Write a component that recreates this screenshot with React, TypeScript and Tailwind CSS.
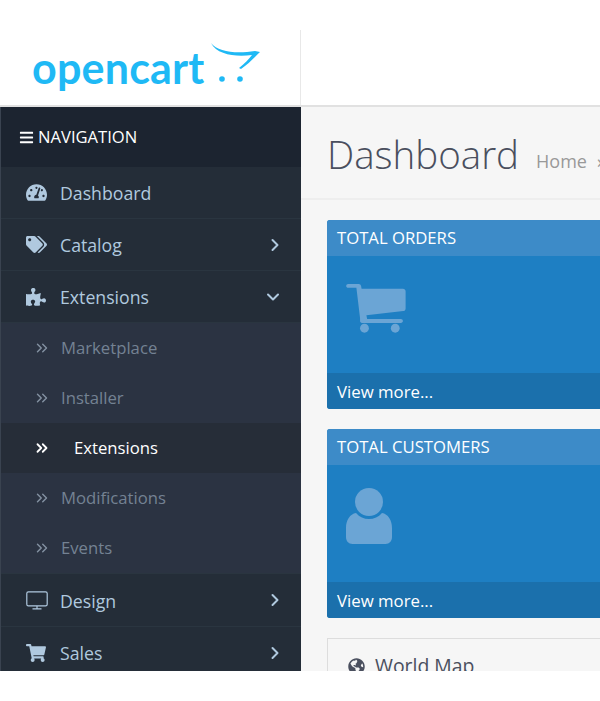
import { ReactNode } from "react";
import {
  FaBars,
  FaGlobeAmericas,
  FaPuzzlePiece,
  FaShoppingCart,
  FaTachometerAlt,
  FaTags,
} from "react-icons/fa";
import { ChevronDown, ChevronRight, ChevronsRight } from "lucide-react";

function Logo() {
  return (
    <div className="flex items-start">
      <span className="font-['Lato'] text-[43px] font-bold leading-[50px] tracking-[0.2px] text-[#1fb9f5]">opencart</span>
      <svg width="54" height="46" viewBox="0 0 54 46" className="-mt-px ml-px text-[#1fb9f5]" fill="currentColor">
        <path d="M5 1 C12 10 30 12 49 9 L54 10 C47 17 42 22 35 27 L33 26 C39 21 43 17 46 13 C30 15 11 13 5 1 Z" />
        <circle cx="16" cy="37" r="2.8" />
        <circle cx="34" cy="37" r="2.8" />
      </svg>
    </div>
  );
}

function MonitorIcon() {
  return (
    <svg width="22" height="19" viewBox="0 0 22 19" fill="none" stroke="currentColor" strokeWidth="1.2">
      <rect x="0.8" y="0.8" width="20.4" height="14" rx="1.6" />
      <path d="M11 15v2.600M6.500 17.800h9" />
    </svg>
  );
}

function NavItem({ icon, label, arrow, tall }: { icon: ReactNode; label: string; arrow?: "right" | "down"; tall?: boolean }) {
  return (
    <div className={`flex items-center border-b border-[#2a3540] bg-[#242d38] pl-[25px] text-[#b0c9df] ${tall ? "h-[53px]" : "h-[52px]"}`}>
      <span className="flex w-[34px] shrink-0 items-center">{icon}</span>
      <span className="flex-1 pt-0.5 text-[17.7px]">{label}</span>
      {arrow === "right" && <ChevronRight size={20} strokeWidth={2.4} className="mr-4" />}
      {arrow === "down" && <ChevronDown size={20} strokeWidth={2.4} className="mr-[18px]" />}
    </div>
  );
}

function SubItem({ label, active }: { label: string; active?: boolean }) {
  return (
    <div className={`flex h-[50px] items-center pl-8 text-[16.7px] ${active ? "bg-[#262d38] text-white" : "text-[#748293]"}`}>
      <span className={`flex shrink-0 items-center ${active ? "w-[41px] text-white" : "w-7 text-[#8391a1]"}`}>
        <ChevronsRight size={18} strokeWidth={active ? 2.4 : 1.9} />
      </span>
      {label}
    </div>
  );
}

function CartTile() {
  return (
    <svg width="60" height="50" viewBox="0 0 62 52" fill="currentColor">
      <path d="M2 0h11c1.400 0 2.200.8 2.500 2L16 5h43c1.600 0 2.800 1.200 2.800 2.800v17.600c0 1.500-1 2.600-2.400 2.800L21 32.500l.8 4h35c1.300 0 2.200 1 2.200 2s-.9 2-2.200 2H16.400c-1.200 0-2-1-2-2v-3.200L10.600 4H2C.9 4 0 3.100 0 2s.9-2 2-2Z" />
      <circle cx="19" cy="46" r="4.600" />
      <circle cx="51" cy="46" r="4.600" />
    </svg>
  );
}

function PersonTile() {
  return (
    <svg width="46" height="56" viewBox="0 0 46 56" fill="currentColor" className="-mt-[5px]">
      <circle cx="23" cy="14" r="14" />
      <path d="M10 25c3.500 4 8 6 13 6s9.500-2 13-6c6 1 10 7 10 15v9c0 4-2.500 7-6.500 7H6.500C2.500 56 0 53 0 49v-9c0-8 4-14 10-15Z" />
    </svg>
  );
}

function Tile({ title, icon }: { title: string; icon: ReactNode }) {
  return (
    <div className="w-[400px] overflow-hidden rounded-[3px] bg-[#1e7fc3] text-white">
      <div className="flex h-9 items-center bg-[#3d8bc8] px-2.5 text-[16.7px]">{title}</div>
      <div className="flex h-[117px] items-start pl-[19px] pt-[28px] text-[#6ba5d5]">{icon}</div>
      <div className="flex h-9 items-center bg-[#1b70ac] px-2.5 pt-px text-[16.8px]">View more...</div>
    </div>
  );
}

export default function App() {
  return (
    <div className="h-[671px] w-[600px] overflow-hidden bg-white pt-[30px] font-['Open_Sans',sans-serif]">
      <header className="flex h-[77px] border-b-2 border-[#e1e1e1]">
        <div className="flex w-[301px] items-center border-r border-[#e8e8e8] pl-8">
          <Logo />
        </div>
      </header>
      <div className="flex h-[564px]">
        <aside className="w-[301px] shrink-0 border-l border-[#3a4350] bg-[#242d38]">
          <div className="flex h-[60px] items-center gap-1 bg-[#1c2430] pl-[18px] text-[16.6px] text-white">
            <FaBars size={15} />
            NAVIGATION
          </div>
          <NavItem icon={<FaTachometerAlt size={21} />} label="Dashboard" />
          <NavItem icon={<FaTags size={21} />} label="Catalog" arrow="right" />
          <NavItem icon={<FaPuzzlePiece size={20} />} label="Extensions" arrow="down" />
          <div className="border-b border-[#2a3540] bg-[#2b3342]">
            <SubItem label="Marketplace" />
            <SubItem label="Installer" />
            <SubItem label="Extensions" active />
            <SubItem label="Modifications" />
            <SubItem label="Events" />
          </div>
          <NavItem icon={<MonitorIcon />} label="Design" arrow="right" tall />
          <NavItem icon={<FaShoppingCart size={20} />} label="Sales" arrow="right" />
        </aside>
        <main className="min-w-0 flex-1 overflow-hidden bg-[#f6f6f6]">
          <div className="flex h-[93px] w-[400px] items-start border-b-2 border-[#eeeeee] pl-[26px] pt-[19px]">
            <h1 className="text-[38.500px] font-light leading-[56px] text-[#4a4f5e]">Dashboard</h1>
            <div className="ml-[17px] mt-[23px] flex gap-2.5 whitespace-nowrap text-[18px] leading-6 text-[#999999]">
              <span>Home</span>
              <span>»</span>
            </div>
          </div>
          <div className="flex flex-col gap-5 pl-[26px] pt-5">
            <Tile title="TOTAL ORDERS" icon={<CartTile />} />
            <Tile title="TOTAL CUSTOMERS" icon={<PersonTile />} />
            <div className="flex w-[400px] items-center gap-2.5 border border-[#dddddd] pl-5 pt-[13px] text-[19.400px] leading-7 text-[#4a4f5e]">
              <FaGlobeAmericas size={17} />
              World Map
            </div>
          </div>
        </main>
      </div>
    </div>
  );
}
